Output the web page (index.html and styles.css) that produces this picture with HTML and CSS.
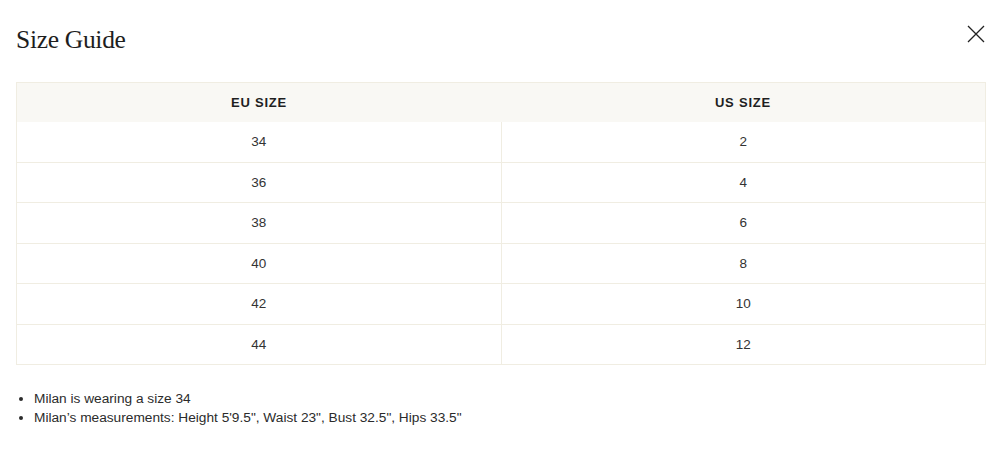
FILE: index.html
```html
<!DOCTYPE html>
<html lang="en">
<head>
<meta charset="utf-8">
<title>Size Guide</title>
<link rel="stylesheet" href="styles.css">
</head>
<body>
<div class="modal">
  <div class="modal-head">
    <h2 class="title">Size Guide</h2>
    <button class="close" aria-label="Close">
      <svg width="18" height="18" viewBox="0 0 18 18"><path d="M1 1L17 17M17 1L1 17" stroke="#222" stroke-width="1.3" fill="none"/></svg>
    </button>
  </div>
  <table class="sizes">
    <thead>
      <tr><th>EU SIZE</th><th>US SIZE</th></tr>
    </thead>
    <tbody>
      <tr><td>34</td><td>2</td></tr>
      <tr><td>36</td><td>4</td></tr>
      <tr><td>38</td><td>6</td></tr>
      <tr><td>40</td><td>8</td></tr>
      <tr><td>42</td><td>10</td></tr>
      <tr><td>44</td><td>12</td></tr>
    </tbody>
  </table>
  <ul class="notes">
    <li>Milan is wearing a size 34</li>
    <li>Milan’s measurements: Height 5'9.5", Waist 23", Bust 32.5", Hips 33.5"</li>
  </ul>
</div>
</body>
</html>
```
FILE: styles.css
```css
html, body {
  margin: 0;
  padding: 0;
  background: #fff;
}
body {
  font-family: "Liberation Sans", Arial, sans-serif;
  color: #2b2b2b;
}
.modal {
  padding: 0 12px 0 16px;
}
.modal-head {
  display: flex;
  justify-content: space-between;
  align-items: flex-start;
  height: 82px;
}
.title {
  margin: 26px 0 0;
  font-family: "Liberation Serif", "Times New Roman", serif;
  font-weight: 400;
  font-size: 25.5px;
  line-height: 28px;
  color: #1e1e1e;
  letter-spacing: -0.3px;
}
.close {
  margin-top: 25px;
  padding: 0;
  border: 0;
  background: none;
  width: 18px;
  height: 18px;
  display: block;
}
.close svg { display: block; }
.sizes {
  width: 970px;
  border-collapse: collapse;
  border: 1px solid #f0ede2;
  font-size: 13.5px;
}
.sizes th {
  background: #f9f8f4;
  height: 39px;
  padding: 0;
  font-weight: 600;
  font-size: 13px;
  letter-spacing: 0.8px;
  color: #1f1f1f;
  text-align: center;
}
.sizes td {
  height: 39.5px;
  padding: 0;
  text-align: center;
  color: #333;
  border-top: 1px solid #f0ede2;
}
.sizes tbody tr:first-child td { border-top: 0; }
.sizes td + td { border-left: 1px solid #f0ede2; }
.notes {
  margin: 24px 0 0;
  padding-left: 18px;
  font-size: 13.7px;
  line-height: 19px;
  color: #2b2b2b;
}
```
